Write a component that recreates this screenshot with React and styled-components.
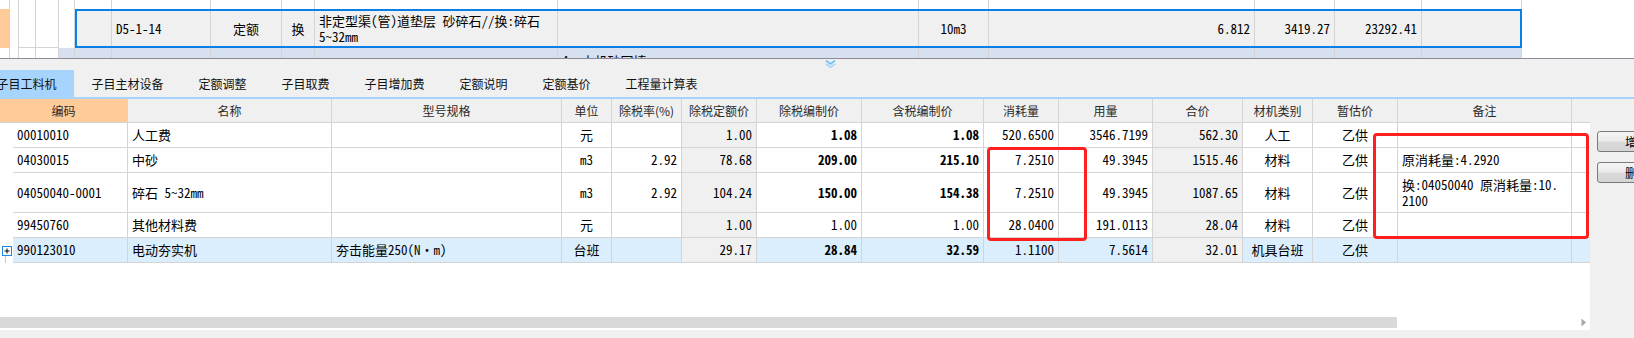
import React from 'react';
import styled, { createGlobalStyle } from 'styled-components';

const GlobalStyle = createGlobalStyle`
  html, body {
    margin: 0;
    padding: 0;
    background: #f0f0f0;
  }
  body {
    width: 1634px;
    height: 338px;
    overflow: hidden;
  }
`;

const cellFont = `"Noto Sans Mono CJK SC", "Liberation Mono", "Noto Sans CJK SC", monospace`;
const uiFont = `"Noto Sans CJK SC", "Noto Sans", sans-serif`;
const line = '#d4d4d4';

const Page = styled.div`
  position: relative;
  width: 1634px;
  height: 338px;
  overflow: hidden;
  background: #f0f0f0;
  display: flex;
  flex-direction: column;
`;

/* ---------- upper (quota) grid ---------- */

const UpperPane = styled.div`
  flex: none;
  height: 58px;
  background: #fff;
  border-bottom: 1px solid #8a8a98;
  display: flex;
  flex-direction: column;
  overflow: hidden;
`;

const URow = styled.div`
  display: flex;
  flex: none;
  height: ${({ h }) => h}px;
`;

const UCell = styled.div`
  flex: none;
  box-sizing: border-box;
  width: ${({ w }) => w}px;
  height: 100%;
  border-right: 1px solid ${line};
  border-bottom: ${({ bottom }) => (bottom ? `1px solid ${line}` : 'none')};
  background: ${({ bg }) => bg || 'transparent'};
  display: flex;
  align-items: ${({ top }) => (top ? 'flex-start' : 'center')};
  justify-content: ${({ a }) => (a === 'right' ? 'flex-end' : a === 'center' ? 'center' : 'flex-start')};
  padding: ${({ top }) => (top ? '5px 4px 0' : '0 4px')};
  font: 13px/16px ${cellFont};
  color: #000;
  white-space: nowrap;
  overflow: hidden;
`;

const SelectedBox = styled.div`
  flex: none;
  box-sizing: border-box;
  width: 1447px;
  height: 100%;
  border: 2px solid #0a7fe8;
  background: #f0f0f0;
  display: flex;
`;

const ChildBox = styled.div`
  flex: none;
  width: 1463px;
  height: 100%;
  background: #d6e0ee;
  display: flex;
`;

/* ---------- splitter + tabs ---------- */

const Splitter = styled.div`
  flex: none;
  height: 11px;
  padding-left: 825px;
  display: flex;
  align-items: flex-start;
  padding-top: 1px;
  box-sizing: border-box;
`;

const TabBar = styled.div`
  flex: none;
  height: 27px;
  border-bottom: 2px solid #a7d4fc;
  display: flex;
  margin-left: -21px;
`;

const Tab = styled.div`
  flex: none;
  height: 27px;
  padding: 0 17.5px;
  font: 12px/27px ${uiFont};
  color: #111;
  background: ${({ active }) => (active ? '#a7d4fc' : 'transparent')};
  white-space: nowrap;
`;

/* ---------- lower (material) grid ---------- */

const Content = styled.div`
  flex: 1;
  display: flex;
  min-height: 0;
`;

const TableArea = styled.div`
  flex: none;
  width: 1590px;
  display: flex;
  flex-direction: column;
`;

const HeaderRow = styled.div`
  flex: none;
  display: flex;
  height: 24px;
  box-sizing: border-box;
  border-bottom: 1px solid ${line};
  background: #f0f0f0;
`;

const HCell = styled.div`
  flex: none;
  box-sizing: border-box;
  width: ${({ w }) => w}px;
  border-right: ${({ last }) => (last ? 'none' : `1px solid ${line}`)};
  background: ${({ bg }) => bg || 'transparent'};
  font: 12px/23px ${uiFont};
  color: #2a2a2a;
  text-align: center;
  white-space: nowrap;
`;

const Body = styled.div`
  flex: none;
  height: 207px;
  box-sizing: border-box;
  padding-bottom: 2px;
  background: #fff;
  display: flex;
  flex-direction: column;
`;

const BRow = styled.div`
  flex: none;
  display: flex;
  height: ${({ h }) => h}px;
`;

const TreeCell = styled.div`
  flex: none;
  width: 13px;
  height: 100%;
  background: #fff;
  display: flex;
  align-items: flex-start;
`;

const BCell = styled.div`
  flex: none;
  box-sizing: border-box;
  width: ${({ w }) => w}px;
  height: 100%;
  border-right: ${({ last }) => (last ? 'none' : `1px solid ${line}`)};
  border-bottom: 1px solid ${line};
  background: ${({ shade, hl }) => (shade ? '#f0f0f0' : hl ? '#dbeefd' : '#fff')};
  display: flex;
  align-items: center;
  justify-content: ${({ a }) => (a === 'right' ? 'flex-end' : a === 'center' ? 'center' : 'flex-start')};
  padding: 0 4px;
  font: ${({ bold }) => (bold ? 700 : 400)} 13px/16px ${cellFont};
  color: #000;
  white-space: nowrap;
  overflow: hidden;
`;

const HScroll = styled.div`
  flex: none;
  margin-top: auto;
  height: 11px;
  display: flex;
  align-items: center;
`;

const Thumb = styled.div`
  flex: none;
  width: 1397px;
  height: 100%;
  background: #d9d9d9;
`;

const Track = styled.div`
  flex: 1;
`;

const SidePanel = styled.div`
  flex: 1;
  display: flex;
  flex-direction: column;
  gap: 10px;
  padding: 32px 0 0 7px;
`;

const SideButton = styled.div`
  flex: none;
  width: 80px;
  height: 21px;
  box-sizing: border-box;
  border: 1px solid #7a7a7a;
  border-radius: 3px;
  background: linear-gradient(#f4f4f4 0%, #ebebeb 45%, #dadada 55%, #d4d4d4 100%);
  font: 12px/19px ${uiFont};
  color: #000;
  text-align: center;
`;

const Mark = styled.div`
  position: absolute;
  left: ${({ x }) => x}px;
  top: ${({ y }) => y}px;
  width: ${({ w }) => w}px;
  height: ${({ h }) => h}px;
  box-sizing: border-box;
  border: 3px solid #ff1f1f;
  border-radius: 4px;
  pointer-events: none;
`;

/* ---------- data ---------- */

const gutter = [10, 8, 17, 23, 16];
const upperCols = [37, 99, 71, 33, 243, 361, 70, 266, 80, 87, 100];

const tabs = ['子目工料机', '子目主材设备', '定额调整', '子目取费', '子目增加费', '定额说明', '定额基价', '工程量计算表'];

const headers = [
  { t: '编码', w: 128, bg: '#ffcc99' },
  { t: '名称', w: 204 },
  { t: '型号规格', w: 230 },
  { t: '单位', w: 50 },
  { t: '除税率(%)', w: 70 },
  { t: '除税定额价', w: 75 },
  { t: '除税编制价', w: 105 },
  { t: '含税编制价', w: 122 },
  { t: '消耗量', w: 75 },
  { t: '用量', w: 94 },
  { t: '合价', w: 90 },
  { t: '材机类别', w: 70 },
  { t: '暂估价', w: 85 },
  { t: '备注', w: 174 },
  { t: '', w: 18, last: true },
];

const cols = [
  { w: 115, a: 'left' },
  { w: 204, a: 'left' },
  { w: 230, a: 'left' },
  { w: 50, a: 'center' },
  { w: 70, a: 'right' },
  { w: 75, a: 'right', shade: true },
  { w: 105, a: 'right', bold: true },
  { w: 122, a: 'right', bold: true },
  { w: 75, a: 'right' },
  { w: 94, a: 'right' },
  { w: 90, a: 'right', shade: true },
  { w: 70, a: 'center' },
  { w: 85, a: 'center' },
  { w: 174, a: 'left' },
  { w: 18, a: 'left', last: true },
];

const rows = [
  { h: 25, cells: ['00010010', '人工费', '', '元', '', '1.00', '1.08', '1.08', '520.6500', '3546.7199', '562.30', '人工', '乙供', '', ''] },
  { h: 25, cells: ['04030015', '中砂', '', 'm3', '2.92', '78.68', '209.00', '215.10', '7.2510', '49.3945', '1515.46', '材料', '乙供', '原消耗量:4.2920', ''] },
  {
    h: 40,
    cells: ['04050040-0001', '碎石 5~32mm', '', 'm3', '2.92', '104.24', '150.00', '154.38', '7.2510', '49.3945', '1087.65', '材料', '乙供',
      <>换:04050040 原消耗量:10.<br />2100</>, ''],
  },
  { h: 25, plain: true, cells: ['99450760', '其他材料费', '', '元', '', '1.00', '1.00', '1.00', '28.0400', '191.0113', '28.04', '材料', '乙供', '', ''] },
  { h: 25, hl: true, expand: true, cells: ['990123010', '电动夯实机', '夯击能量250(N·m)', '台班', '', '29.17', '28.84', '32.59', '1.1100', '7.5614', '32.01', '机具台班', '乙供', '', ''] },
];

/* ---------- icons ---------- */

const Chevrons = () => (
  <svg width="11" height="8" viewBox="0 0 11 8">
    <path d="M1 0.5 L5.5 4 L10 0.5" fill="none" stroke="#6cc0f7" strokeWidth="1.6" />
    <path d="M1 3.8 L5.5 7.3 L10 3.8" fill="none" stroke="#9ed6fb" strokeWidth="1.6" />
  </svg>
);

const ExpandBox = () => (
  <svg width="13" height="25" viewBox="0 0 13 25">
    <rect x="2.5" y="8.5" width="9" height="9" fill="#fff" stroke="#1e88e5" />
    <path d="M4.5 13 H9.5 M7 10.5 V15.5" stroke="#000" strokeWidth="1" />
    <path d="M5.5 18 V25" stroke="#c8c8c8" strokeWidth="1" />
  </svg>
);

const RightArrow = () => (
  <svg width="6" height="9" viewBox="0 0 6 9" style={{ marginRight: 3 }}>
    <path d="M0.5 0.5 L5 4.5 L0.5 8.5 Z" fill="#a8a8a8" />
  </svg>
);

/* ---------- component ---------- */

export default function App() {
  return (
    <Page>
      <GlobalStyle />

      <UpperPane>
        <URow h={9}>
          {gutter.map((w, i) => (
            <UCell key={i} w={w} />
          ))}
          {upperCols.map((w, i) => (
            <UCell key={'u' + i} w={w} />
          ))}
        </URow>

        <URow h={39}>
          {gutter.map((w, i) => (
            <UCell key={i} w={w} bg={i === 0 ? '#ffcc99' : undefined} bottom={i > 1 && i < 4} />
          ))}
          <SelectedBox>
            <UCell w={35} />
            <UCell w={99}>D5-1-14</UCell>
            <UCell w={71} a="center">定额</UCell>
            <UCell w={33} a="center">换</UCell>
            <UCell w={243}>
              <span>非定型渠(管)道垫层 砂碎石//换:碎石<br />5~32mm</span>
            </UCell>
            <UCell w={361} />
            <UCell w={70} a="center">10m3</UCell>
            <UCell w={266} a="right">6.812</UCell>
            <UCell w={80} a="right">3419.27</UCell>
            <UCell w={87} a="right">23292.41</UCell>
          </SelectedBox>
        </URow>

        <URow h={10}>
          {gutter.slice(0, 4).map((w, i) => (
            <UCell key={i} w={w} />
          ))}
          <ChildBox>
            {[16, 37, 99, 71, 33, 243].map((w, i) => (
              <UCell key={i} w={w} />
            ))}
            <UCell w={361} top>4&nbsp;&nbsp;土机砂回填</UCell>
            {[70, 266, 80, 87, 100].map((w, i) => (
              <UCell key={'c' + i} w={w} />
            ))}
          </ChildBox>
        </URow>
      </UpperPane>

      <Splitter>
        <Chevrons />
      </Splitter>

      <TabBar>
        {tabs.map((t, i) => (
          <Tab key={t} active={i === 0}>{t}</Tab>
        ))}
      </TabBar>

      <Content>
        <TableArea>
          <HeaderRow>
            {headers.map((h, i) => (
              <HCell key={i} w={h.w} bg={h.bg} last={h.last}>{h.t}</HCell>
            ))}
          </HeaderRow>

          <Body>
            {rows.map((r, ri) => (
              <BRow key={ri} h={r.h}>
                <TreeCell>{r.expand && <ExpandBox />}</TreeCell>
                {cols.map((c, ci) => (
                  <BCell
                    key={ci}
                    w={c.w}
                    a={c.a}
                    last={c.last}
                    shade={c.shade}
                    hl={r.hl}
                    bold={c.bold && !r.plain}
                  >
                    <span>{r.cells[ci]}</span>
                  </BCell>
                ))}
              </BRow>
            ))}

            <HScroll>
              <Thumb />
              <Track />
              <RightArrow />
            </HScroll>
          </Body>
        </TableArea>

        <SidePanel>
          <SideButton>增加</SideButton>
          <SideButton>删除</SideButton>
        </SidePanel>
      </Content>

      <Mark x={987} y={147} w={100} h={94} />
      <Mark x={1373} y={133} w={216} h={106} />
    </Page>
  );
}
